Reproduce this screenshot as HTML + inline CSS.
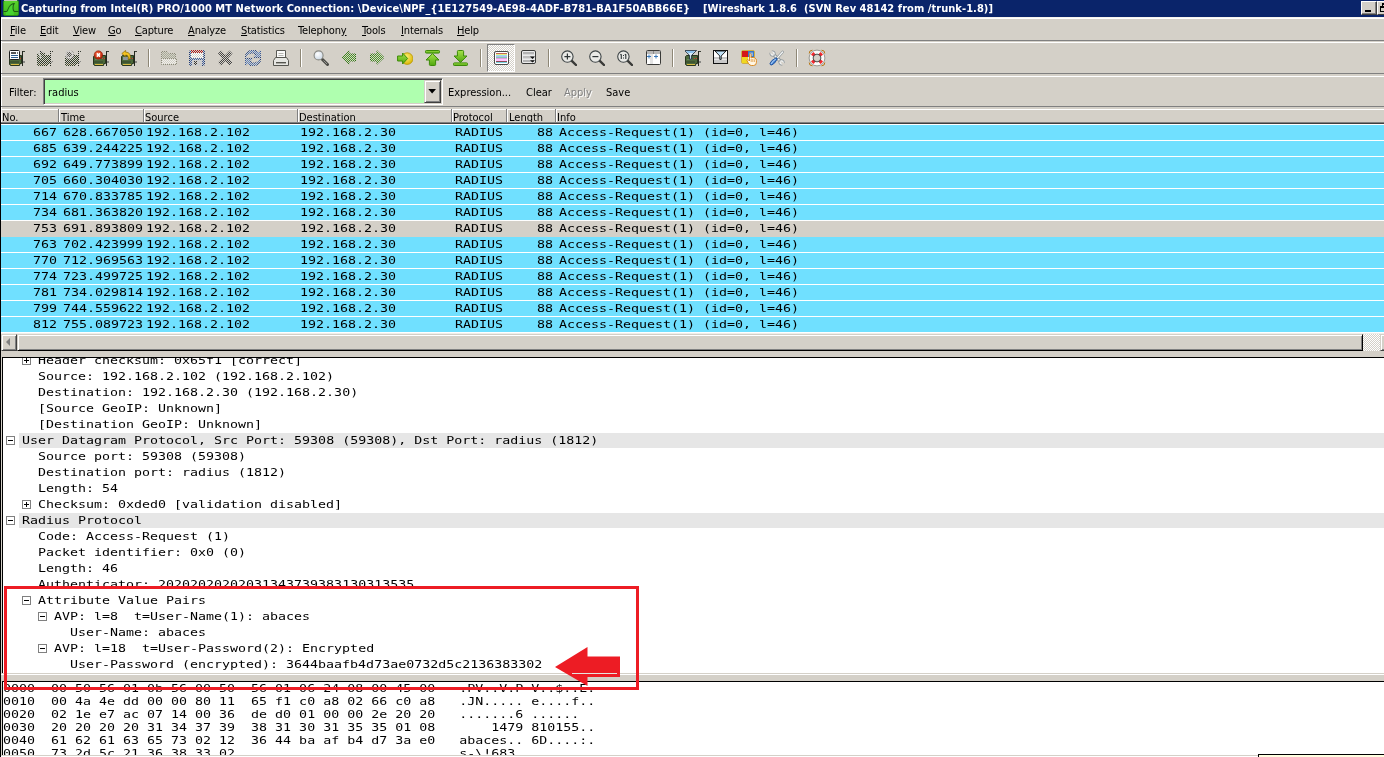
<!DOCTYPE html><html><head><meta charset="utf-8"><title>Wireshark</title><style>
html,body{margin:0;padding:0}
body{width:1384px;height:757px;position:relative;overflow:hidden;background:#D4D0C8;font-family:"DejaVu Sans Condensed","Liberation Sans",sans-serif;font-size:11px;color:#000}
.a{position:absolute}
.t{position:absolute;white-space:pre;line-height:13px;height:13px}
.m{position:absolute;white-space:pre;font-family:"DejaVu Sans Mono","Liberation Mono",monospace;font-size:11px;line-height:16px;height:16px;transform:scaleX(1.2085);transform-origin:0 0;left:0}
.hl{position:absolute;left:1px;right:0;height:1px}
u{text-decoration:underline;text-underline-offset:1px}
.row{position:absolute;left:1px;right:0;height:15px;background:#70E0FF;border-bottom:1px solid #fff;overflow:hidden}
.row .m{top:0px}
.tr .m{top:2px}
.tr{position:absolute;left:0;right:0;height:16px}
.ex{position:absolute;width:7px;height:7px;border:1px solid #808080;background:#fff}
.ex i{position:absolute;left:1px;top:3px;width:5px;height:1px;background:#000}
.ex b{position:absolute;left:3px;top:1px;width:1px;height:5px;background:#000}
.hx{position:absolute;left:0;white-space:pre;font-family:"DejaVu Sans Mono","Liberation Mono",monospace;font-size:11px;line-height:13px;height:13px;transform:scaleX(1.2085);transform-origin:0 0}
</style></head><body><div id="w" style="position:absolute;left:0;top:0;width:1384px;height:757px;will-change:transform">
<div class="a" style="left:0;top:0;width:1px;height:757px;background:#000"></div>
<div class="a" id="title" style="left:1px;top:0;right:0;height:17px;background:#0A246A"></div>
<svg class="a" style="left:3px;top:0" width="16" height="16" viewBox="0 0 16 16"><defs><linearGradient id="ag" x1="0" y1="0" x2="0" y2="1"><stop offset="0" stop-color="#58D22C"/><stop offset="1" stop-color="#3FB81E"/></linearGradient></defs><rect x="0.5" y="0.5" width="15" height="15" rx="1.5" fill="url(#ag)" stroke="#2B8A1A"/><rect x="1" y="0" width="13" height="1" fill="#BFC8B8"/><path d="M0.5 11.5 H3.6 C5.4 11.5 5.2 4.4 11 3.6 C9.4 6.2 9.8 11.5 11.6 11.5 H15.5" fill="none" stroke="#1F5E14" stroke-width="1.1"/><path d="M4.6 11.5 C5.8 9 6 5 10.2 4.2 C8.8 7 9.4 11 10.8 12 V15 H3 V12 Z" fill="#49E63C" opacity="0.55"/></svg>
<div class="t" id="tt1" style="left:21px;top:2px;letter-spacing:0.073px;color:#fff;font-weight:bold">Capturing from Intel(R) PRO/1000 MT Network Connection: \Device\NPF_{1E127549-AE98-4ADF-B781-BA1F50ABB66E}</div>
<div class="t" id="tt2" style="left:703px;top:2px;letter-spacing:0.05px;color:#fff;font-weight:bold">[Wireshark 1.8.6  (SVN Rev 48142 from /trunk-1.8)]</div>
<div class="a" style="left:1361px;top:1px;width:14px;height:12px;background:#D4D0C8;border:1px solid;border-color:#fff #404040 #404040 #fff;box-shadow:inset -1px -1px 0 #808080"><div class="a" style="left:3px;top:8px;width:6px;height:2px;background:#000"></div></div>
<div class="a" style="left:1377px;top:1px;width:14px;height:12px;background:#D4D0C8;border:1px solid;border-color:#fff #404040 #404040 #fff"><div class="a" style="left:4px;top:1px;width:5px;height:4px;border:1px solid #000;border-top-width:2px"></div><div class="a" style="left:2px;top:4px;width:4px;height:3px;border:1px solid #000;border-top-width:2px;background:#D4D0C8"></div></div>
<div class="a" style="left:1px;top:17px;width:1px;height:106px;background:#fff"></div>
<div class="hl" style="top:17px;background:#F6F4EE"></div><div class="hl" style="top:18px;background:#fff"></div>
<div class="t" style="left:10px;top:24px;letter-spacing:-0.15px"><u>F</u>ile</div>
<div class="t" style="left:40px;top:24px;letter-spacing:-0.15px"><u>E</u>dit</div>
<div class="t" style="left:73px;top:24px;letter-spacing:-0.15px"><u>V</u>iew</div>
<div class="t" style="left:108px;top:24px;letter-spacing:-0.15px"><u>G</u>o</div>
<div class="t" style="left:135px;top:24px;letter-spacing:-0.15px"><u>C</u>apture</div>
<div class="t" style="left:188px;top:24px;letter-spacing:-0.15px"><u>A</u>nalyze</div>
<div class="t" style="left:241px;top:24px;letter-spacing:-0.15px"><u>S</u>tatistics</div>
<div class="t" style="left:298px;top:24px;letter-spacing:-0.15px">Telephon<u>y</u></div>
<div class="t" style="left:362px;top:24px;letter-spacing:-0.15px"><u>T</u>ools</div>
<div class="t" style="left:401px;top:24px;letter-spacing:-0.15px"><u>I</u>nternals</div>
<div class="t" style="left:457px;top:24px;letter-spacing:-0.15px"><u>H</u>elp</div>
<div class="hl" style="top:40px;background:#808080"></div><div class="hl" style="top:42px;background:#fff"></div>
<svg class="a" width="0" height="0" style="left:0;top:0"><defs><pattern id="chk" width="2" height="2" patternUnits="userSpaceOnUse"><rect width="1" height="1" fill="#fff"/><rect x="1" y="1" width="1" height="1" fill="#fff"/></pattern><mask id="dm" maskUnits="userSpaceOnUse" x="0" y="0" width="16" height="16"><rect width="16" height="16" fill="url(#chk)"/></mask><linearGradient id="gg" x1="0" y1="0" x2="0" y2="1"><stop offset="0" stop-color="#A6E24A"/><stop offset="1" stop-color="#4FA70E"/></linearGradient><radialGradient id="yg" cx="0.4" cy="0.35" r="0.7"><stop offset="0" stop-color="#FFF27A"/><stop offset="1" stop-color="#D9B400"/></radialGradient><radialGradient id="lens" cx="0.4" cy="0.35" r="0.7"><stop offset="0" stop-color="#FFFFFF"/><stop offset="1" stop-color="#C9D6E4"/></radialGradient><radialGradient id="rg" cx="0.4" cy="0.3" r="0.8"><stop offset="0" stop-color="#F0603A"/><stop offset="1" stop-color="#B21800"/></radialGradient></defs></svg>
<svg class="a" style="left:9px;top:50px" width="16" height="16" viewBox="0 0 16 16" ><path d="M0.5 6.5 L1.5 5.5 H12.5 V13.5 H11 L10.5 15.5 H1.5 L0.5 14.5 Z" fill="#4C683B" stroke="#28361F"/><rect x="1" y="11" width="9" height="2" fill="#3E5531"/><rect x="2" y="9" width="5" height="1" fill="#66845A"/><rect x="2" y="14" width="8" height="1" fill="#D9BC45"/><rect x="9" y="8" width="1" height="1" fill="#D23A2E"/><rect x="11" y="8" width="1" height="1" fill="#D23A2E"/><rect x="13" y="1" width="1" height="15" fill="#23281F"/><rect x="14" y="1" width="2" height="1" fill="#3A3F36"/><rect x="14" y="11" width="2" height="2" fill="#8A8A86"/><rect x="0.5" y="0.5" width="10" height="9" rx="1" fill="#fff" stroke="#1E1E1E"/><rect x="2" y="2" width="5" height="2" fill="#555"/><rect x="8" y="2" width="1" height="2" fill="#777"/><rect x="2" y="5" width="7" height="1" fill="#2F5F8F"/><rect x="2" y="7" width="7" height="1" fill="#2F5F8F"/></svg>
<svg class="a" style="left:37px;top:50px" width="16" height="16" viewBox="0 0 16 16" ><g mask="url(#dm)"><path d="M0.5 6.5 L1.5 5.5 H12.5 V13.5 H11 L10.5 15.5 H1.5 L0.5 14.5 Z" fill="#34422B" stroke="#28361F"/><rect x="1" y="11" width="9" height="2" fill="#2A3324"/><rect x="2" y="9" width="5" height="1" fill="#34422B"/><rect x="2" y="14" width="8" height="1" fill="#5A5230"/><rect x="9" y="8" width="1" height="1" fill="#D23A2E"/><rect x="11" y="8" width="1" height="1" fill="#D23A2E"/><rect x="13" y="1" width="1" height="15" fill="#23281F"/><rect x="14" y="1" width="2" height="1" fill="#3A3F36"/><rect x="14" y="11" width="2" height="2" fill="#8A8A86"/><rect x="0" y="3" width="8" height="3" fill="#34422B"/><path d="M1 1 L4 8" stroke="#D8D8D8" stroke-width="1.6"/><path d="M3 1 L6 3" stroke="#222" stroke-width="1.4"/></g></svg>
<svg class="a" style="left:65px;top:50px" width="16" height="16" viewBox="0 0 16 16" ><g mask="url(#dm)"><path d="M0.5 6.5 L1.5 5.5 H12.5 V13.5 H11 L10.5 15.5 H1.5 L0.5 14.5 Z" fill="#34422B" stroke="#28361F"/><rect x="1" y="11" width="9" height="2" fill="#2A3324"/><rect x="2" y="9" width="5" height="1" fill="#34422B"/><rect x="2" y="14" width="8" height="1" fill="#5A5230"/><rect x="9" y="8" width="1" height="1" fill="#D23A2E"/><rect x="11" y="8" width="1" height="1" fill="#D23A2E"/><rect x="13" y="1" width="1" height="15" fill="#23281F"/><rect x="14" y="1" width="2" height="1" fill="#3A3F36"/><rect x="14" y="11" width="2" height="2" fill="#8A8A86"/><circle cx="4.6" cy="5" r="4.6" fill="#555"/><circle cx="4.2" cy="4.4" r="3.4" fill="none" stroke="#D8D8D8" stroke-width="1.6"/></g></svg>
<svg class="a" style="left:93px;top:50px" width="16" height="16" viewBox="0 0 16 16" ><path d="M0.5 6.5 L1.5 5.5 H12.5 V13.5 H11 L10.5 15.5 H1.5 L0.5 14.5 Z" fill="#4C683B" stroke="#28361F"/><rect x="1" y="11" width="9" height="2" fill="#3E5531"/><rect x="2" y="9" width="5" height="1" fill="#66845A"/><rect x="2" y="14" width="8" height="1" fill="#D9BC45"/><rect x="9" y="8" width="1" height="1" fill="#D23A2E"/><rect x="11" y="8" width="1" height="1" fill="#D23A2E"/><rect x="13" y="1" width="1" height="15" fill="#23281F"/><rect x="14" y="1" width="2" height="1" fill="#3A3F36"/><rect x="14" y="11" width="2" height="2" fill="#8A8A86"/><circle cx="5.4" cy="5" r="4.2" fill="url(#rg)" stroke="#8E1A08" stroke-width="0.6"/><path d="M3.8 3.4 L7 6.6 M7 3.4 L3.8 6.6" stroke="#fff" stroke-width="1.5"/></svg>
<svg class="a" style="left:121px;top:50px" width="16" height="16" viewBox="0 0 16 16" ><path d="M0.5 6.5 L1.5 5.5 H12.5 V13.5 H11 L10.5 15.5 H1.5 L0.5 14.5 Z" fill="#4C683B" stroke="#28361F"/><rect x="1" y="11" width="9" height="2" fill="#3E5531"/><rect x="2" y="9" width="5" height="1" fill="#66845A"/><rect x="2" y="14" width="8" height="1" fill="#D9BC45"/><rect x="9" y="8" width="1" height="1" fill="#D23A2E"/><rect x="11" y="8" width="1" height="1" fill="#D23A2E"/><rect x="13" y="1" width="1" height="15" fill="#23281F"/><rect x="14" y="1" width="2" height="1" fill="#3A3F36"/><rect x="14" y="11" width="2" height="2" fill="#8A8A86"/><rect x="2" y="7" width="5" height="3" fill="#8E979B"/><path d="M0.8 3.6 L4.6 0.4 V2.2 C8.5 2.2 10 4.6 9 8.8 L7.2 9.6 C7.8 6.6 6.8 5 4.6 5 V6.8 Z" fill="#F4C320" stroke="#8A6A08" stroke-width="0.7"/></svg>
<div class="a" style="left:148px;top:49px;width:1px;height:18px;background:#8E8776"></div><div class="a" style="left:149px;top:49px;width:1px;height:18px;background:#fff"></div>
<svg class="a" style="left:161px;top:50px" width="16" height="16" viewBox="0 0 16 16" ><g mask="url(#dm)"><path d="M0.5 1.5 H6.5 L7.5 3.5 H14.5 V8 L15.5 9 V14.5 H0.5 Z" fill="#F0F0EA" stroke="#8A8A78"/><path d="M1 2 H6.2 L7.2 4 H14 V8 H1 Z" fill="#A8AC98"/><path d="M0.5 8.5 H15" stroke="#8A8A78"/></g></svg>
<svg class="a" style="left:189px;top:50px" width="16" height="16" viewBox="0 0 16 16" ><g mask="url(#dm)"><rect x="0.5" y="0.5" width="15" height="15" rx="1" fill="#3E5FA0" stroke="#1F3C78"/><rect x="2" y="0" width="12" height="3" fill="#B01818"/><rect x="2" y="3" width="12" height="5" fill="#fff"/><rect x="3" y="10" width="10" height="6" fill="#C8CCD4"/><rect x="5" y="11" width="3" height="4" fill="#333"/></g></svg>
<svg class="a" style="left:217px;top:50px" width="16" height="16" viewBox="0 0 16 16" ><g mask="url(#dm)"><path d="M2.5 2 L14 14 M14 2 L2.5 14" stroke="#444" stroke-width="4.2"/></g></svg>
<svg class="a" style="left:245px;top:50px" width="16" height="16" viewBox="0 0 16 16" ><g mask="url(#dm)"><path d="M0 6.2 C1.5 2 5 0 8 0 C10 0 12 0.8 13.4 2.4 L16 0 V7.6 H8.4 L10.8 5 C9.8 3.6 8.6 3 7.4 3 C4.8 3 2.6 4.4 1.2 6.8 Z" fill="#5C82C0" stroke="#14306C" stroke-width="0.9"/><g transform="rotate(180 8 8)"><path d="M0 6.2 C1.5 2 5 0 8 0 C10 0 12 0.8 13.4 2.4 L16 0 V7.6 H8.4 L10.8 5 C9.8 3.6 8.6 3 7.4 3 C4.8 3 2.6 4.4 1.2 6.8 Z" fill="#5C82C0" stroke="#14306C" stroke-width="0.9"/></g></g></svg>
<svg class="a" style="left:273px;top:50px" width="16" height="16" viewBox="0 0 16 16" ><path d="M3.5 8 V0.5 H12.5 V8" fill="#FBFBFA" stroke="#5A5A55"/><path d="M5.5 3.5 H10.5 M5.5 5.5 H10.5" stroke="#B5B5B0"/><path d="M2.5 7.5 H13.5 L15.5 10.5 V15.5 H0.5 V10.5 Z" fill="#E6E6E2" stroke="#55554F"/><rect x="3" y="12" width="10" height="1.4" fill="#55554F"/></svg>
<div class="a" style="left:300px;top:49px;width:1px;height:18px;background:#8E8776"></div><div class="a" style="left:301px;top:49px;width:1px;height:18px;background:#fff"></div>
<svg class="a" style="left:313px;top:50px" width="16" height="16" viewBox="0 0 16 16" ><path d="M9.5 9.5 L14.5 14.5" stroke="#4A4A46" stroke-width="3" stroke-linecap="round"/><path d="M10.5 10.5 L14 14" stroke="#9A9A94" stroke-width="1"/><circle cx="5.6" cy="5.4" r="4.5" fill="url(#lens)" stroke="#8A8A84" stroke-width="1.1"/></svg>
<svg class="a" style="left:341px;top:50px" width="16" height="16" viewBox="0 0 16 16" ><g mask="url(#dm)"><path d="M1 7.5 L8 0.8 V4 H14.5 V11 H8 V14.2 Z" fill="#4E9A2A" stroke="#2E7010"/></g></svg>
<svg class="a" style="left:369px;top:50px" width="16" height="16" viewBox="0 0 16 16" ><g mask="url(#dm)"><path d="M15 7.5 L8 0.8 V4 H1.5 V11 H8 V14.2 Z" fill="#4E9A2A" stroke="#2E7010"/></g></svg>
<svg class="a" style="left:397px;top:50px" width="16" height="16" viewBox="0 0 16 16" ><circle cx="10.2" cy="8.6" r="5.8" fill="url(#yg)" stroke="#B89400" stroke-width="0.8"/><path d="M10.6 8.5 L5.6 3 V6 H0.6 V11 H5.6 V14 Z" fill="url(#gg)" stroke="#3C8A08" stroke-width="1"/></svg>
<svg class="a" style="left:425px;top:50px" width="16" height="16" viewBox="0 0 16 16" ><rect x="0.5" y="0.5" width="14" height="2.6" rx="0.8" fill="url(#gg)" stroke="#3C8A08"/><path d="M7.5 6 L10.5 9 H9 V14 H6 V9 H4.5 Z" fill="#C8F08A" opacity="0.0"/><path d="M7.5 3.6 L14 10 H10.6 V14.6 Q10.6 15.5 9.6 15.5 H5.4 Q4.4 15.5 4.4 14.6 V10 H1 Z" fill="url(#gg)" stroke="#3C8A08"/></svg>
<svg class="a" style="left:453px;top:50px" width="16" height="16" viewBox="0 0 16 16" ><rect x="0.5" y="12.9" width="14" height="2.6" rx="0.8" fill="url(#gg)" stroke="#3C8A08"/><path d="M7.5 12.4 L14 6 H10.6 V1.4 Q10.6 0.5 9.6 0.5 H5.4 Q4.4 0.5 4.4 1.4 V6 H1 Z" fill="url(#gg)" stroke="#3C8A08"/></svg>
<div class="a" style="left:480px;top:49px;width:1px;height:18px;background:#8E8776"></div><div class="a" style="left:481px;top:49px;width:1px;height:18px;background:#fff"></div>
<div class="a" style="left:487px;top:44px;width:28px;height:28px;box-sizing:border-box;background:repeating-conic-gradient(#fff 0% 25%, #D4D0C8 0% 50%) 0 0/2px 2px;border:1px solid;border-color:#808080 #fff #fff #808080"></div>
<svg class="a" style="left:494px;top:51px" width="15" height="14" viewBox="0 0 15 14" ><rect x="0.5" y="0.5" width="14" height="13" rx="1.5" fill="#fff" stroke="#4A4A48"/><rect x="2" y="2" width="11" height="1" fill="#C06858"/><rect x="2" y="3" width="11" height="1" fill="#F0EA80"/><rect x="2" y="4" width="11" height="1" fill="#98E0EA"/><rect x="2" y="5" width="11" height="1" fill="#B4BCF0"/><rect x="2" y="6" width="11" height="1" fill="#84C8B4"/><rect x="2" y="7" width="11" height="1" fill="#E0A0DC"/><rect x="2" y="8" width="11" height="2" fill="#FFC4FF"/><rect x="2" y="10" width="11" height="1" fill="#8A4850"/><rect x="2" y="11" width="11" height="1" fill="#78D0DC"/></svg>
<svg class="a" style="left:521px;top:50px" width="15" height="14" viewBox="0 0 15 14" ><rect x="0.5" y="0.5" width="14" height="13" rx="1.5" fill="#ECECEC" stroke="#3A3A38"/><rect x="2" y="2" width="11" height="2" fill="#B4B4B4"/><rect x="2" y="4" width="11" height="1" fill="#DADADA"/><rect x="2" y="6" width="11" height="2" fill="#BEBEBE"/><rect x="2" y="8" width="11" height="1" fill="#DADADA"/><rect x="2" y="10" width="11" height="2" fill="#B4B4B4"/><path d="M9 6.6 H14 L11.5 9 Z M9 10.2 H14 L11.5 12.6 Z" fill="#111"/></svg>
<div class="a" style="left:548px;top:49px;width:1px;height:18px;background:#8E8776"></div><div class="a" style="left:549px;top:49px;width:1px;height:18px;background:#fff"></div>
<svg class="a" style="left:561px;top:50px" width="16" height="16" viewBox="0 0 16 16" ><path d="M10.8 10.8 L15 15" stroke="#3A3A38" stroke-width="2.4" stroke-linecap="round"/><circle cx="6.4" cy="6.6" r="5.7" fill="#E9E9E6" stroke="#3E4446" stroke-width="1.1"/><path d="M3.4 6.6 H9.4 M6.4 3.6 V9.6" stroke="#2E3436" stroke-width="1.2"/></svg>
<svg class="a" style="left:589px;top:50px" width="16" height="16" viewBox="0 0 16 16" ><path d="M10.8 10.8 L15 15" stroke="#3A3A38" stroke-width="2.4" stroke-linecap="round"/><circle cx="6.4" cy="6.6" r="5.7" fill="#E9E9E6" stroke="#3E4446" stroke-width="1.1"/><path d="M3.4 6.6 H9.4" stroke="#2E3436" stroke-width="1.2"/></svg>
<svg class="a" style="left:617px;top:50px" width="16" height="16" viewBox="0 0 16 16" ><path d="M10.8 10.8 L15 15" stroke="#3A3A38" stroke-width="2.4" stroke-linecap="round"/><circle cx="6.4" cy="6.6" r="5.7" fill="#E9E9E6" stroke="#3E4446" stroke-width="1.1"/><path d="M4.3 4.2 V9 M3.4 5 L4.3 4.2 M8.8 4.2 V9 M7.9 5 L8.8 4.2" stroke="#2E3436" stroke-width="1.1" fill="none"/><rect x="6" y="5" width="1" height="1" fill="#2E3436"/><rect x="6" y="7.5" width="1" height="1" fill="#2E3436"/></svg>
<svg class="a" style="left:646px;top:50px" width="15" height="15" viewBox="0 0 15 15" ><rect x="0.5" y="0.5" width="14" height="14" rx="1" fill="#fff" stroke="#3A3A38"/><rect x="1" y="1" width="13" height="3" fill="#B8B8B8"/><rect x="4" y="4" width="3" height="10" fill="#E4E4E4"/><path d="M7.5 1 V4" stroke="#888"/><path d="M1 6.5 H5 M3 4.5 V8.5 M8 6.5 H12 M10 4.5 V8.5" stroke="#3A78B8" stroke-width="1"/></svg>
<div class="a" style="left:672px;top:49px;width:1px;height:18px;background:#8E8776"></div><div class="a" style="left:673px;top:49px;width:1px;height:18px;background:#fff"></div>
<svg class="a" style="left:685px;top:50px" width="16" height="16" viewBox="0 0 16 16" ><path d="M0.5 6.5 L1.5 5.5 H12.5 V13.5 H11 L10.5 15.5 H1.5 L0.5 14.5 Z" fill="#4C683B" stroke="#28361F"/><rect x="1" y="11" width="9" height="2" fill="#3E5531"/><rect x="2" y="9" width="5" height="1" fill="#66845A"/><rect x="2" y="14" width="8" height="1" fill="#D9BC45"/><rect x="9" y="8" width="1" height="1" fill="#D23A2E"/><rect x="11" y="8" width="1" height="1" fill="#D23A2E"/><rect x="13" y="1" width="1" height="15" fill="#23281F"/><rect x="14" y="1" width="2" height="1" fill="#3A3F36"/><rect x="14" y="11" width="2" height="2" fill="#8A8A86"/><path d="M-0.5 0.4 H11.5 L6.6 5.4 V9.2 H4.6 V5.4 Z" fill="#D6ECFA" stroke="#1A2A3A" stroke-width="0.9"/><path d="M1 1 H10 L8 3 H3 Z" fill="#8EC4EE"/></svg>
<svg class="a" style="left:713px;top:50px" width="15" height="14" viewBox="0 0 15 14" ><rect x="0.5" y="0.5" width="14" height="13" fill="#fff" stroke="#111"/><rect x="1" y="7" width="13" height="6" fill="#C9C9C9"/><rect x="1" y="9" width="13" height="1" fill="#E8E8E8"/><path d="M2 1 H13 L8.2 6 V9.4 H6.8 V6 Z" fill="#BFE0F6" stroke="#111" stroke-width="0.9"/></svg>
<svg class="a" style="left:741px;top:50px" width="16" height="16" viewBox="0 0 16 16" ><rect x="0.5" y="0.5" width="13" height="13" rx="1.5" fill="#fff" stroke="#C8A020" stroke-width="0.8"/><rect x="1" y="1" width="6" height="6" fill="#D41818"/><rect x="7" y="1" width="6" height="6" fill="#3A78C8"/><rect x="8.5" y="2.5" width="3.5" height="3.5" fill="#8CB4E8"/><rect x="1" y="7" width="6" height="6" fill="#F0D820"/><rect x="7" y="7" width="6" height="6" fill="#F4F0E0"/><path d="M8.5 4.6 Q8.5 3.6 9.3 3.6 Q10.1 3.6 10.1 4.6 V8 L11 7.4 L12 7.6 L13 7.6 L14.2 8.2 Q15.4 8.8 15.4 10.4 V12.5 Q15.4 15.5 12.5 15.5 H10.5 Q8.6 15.5 7.6 13.6 L6 10.8 Q5.6 9.8 6.6 9.6 Q7.4 9.6 8.5 11 Z" fill="#FFF6E4" stroke="#D88010" stroke-width="0.9"/><path d="M10.2 9 V12 M11.8 9 V12 M13.4 9.4 V12" stroke="#D88010" stroke-width="0.6"/></svg>
<svg class="a" style="left:769px;top:50px" width="16" height="16" viewBox="0 0 16 16" ><path d="M4 4 L12.4 12.2" stroke="#8A9296" stroke-width="3.2"/><path d="M4 4 L12.4 12.2" stroke="#EEF0F0" stroke-width="1.6"/><circle cx="3.6" cy="3.6" r="2.7" fill="#EEF0F0" stroke="#8A9296" stroke-width="0.9"/><path d="M3.6 3.6 L-0.5 1.2 L1.2 -0.5 Z" fill="#D4D0C8" stroke="#D4D0C8" stroke-width="1.2"/><circle cx="12.6" cy="12.4" r="2.7" fill="#EEF0F0" stroke="#8A9296" stroke-width="0.9"/><path d="M12.6 12.4 L16.8 14.6 L15 16.6 Z" fill="#D4D0C8" stroke="#D4D0C8" stroke-width="1.2"/><path d="M13.6 2 L8.6 7.6" stroke="#8A9296" stroke-width="2.6" stroke-linecap="round"/><path d="M13.6 2 L8.6 7.6" stroke="#F4F6F6" stroke-width="1.3" stroke-linecap="round"/><path d="M8 8 L6.8 8 Q2 10.5 1 13.4 Q1 15.2 2.8 15 Q6 13.6 8 9.4 Z" fill="#3E7ED0" stroke="#1C4E98" stroke-width="0.9"/><path d="M6.4 9.4 Q3.4 11.4 2.4 13.4" stroke="#A8CCF4" stroke-width="1.1" fill="none" stroke-linecap="round"/></svg>
<div class="a" style="left:796px;top:49px;width:1px;height:18px;background:#8E8776"></div><div class="a" style="left:797px;top:49px;width:1px;height:18px;background:#fff"></div>
<svg class="a" style="left:808px;top:49px" width="18" height="18" viewBox="0 0 18 18" ><g fill="none" stroke="#B87818" stroke-width="1"><path d="M1.2 4.5 Q1 1.2 4.5 1.2 M13.5 1.2 Q17 1.2 16.8 4.5 M16.8 13.5 Q17 16.8 13.5 16.8 M4.5 16.8 Q1 16.8 1.2 13.5"/></g><circle cx="9" cy="9" r="5.9" fill="none" stroke="#FAFAF8" stroke-width="4.2"/><g fill="#F4262C"><rect x="-1.7" y="-1.7" width="3.4" height="3.4" transform="translate(5.4 5.4) rotate(45)"/><rect x="-1.7" y="-1.7" width="3.4" height="3.4" transform="translate(12.6 5.4) rotate(45)"/><rect x="-1.7" y="-1.7" width="3.4" height="3.4" transform="translate(5.4 12.6) rotate(45)"/><rect x="-1.7" y="-1.7" width="3.4" height="3.4" transform="translate(12.6 12.6) rotate(45)"/></g><circle cx="9" cy="9" r="7.9" fill="none" stroke="#8E8E8A" stroke-width="0.9"/><circle cx="9" cy="9" r="3.9" fill="none" stroke="#4A4E4E" stroke-width="1"/></svg>
<div class="hl" style="top:73px;background:#808080"></div><div class="hl" style="top:76px;background:#fff"></div>
<div class="t" style="left:9px;top:86px">Filter:</div>
<div class="a" style="left:43px;top:78px;width:400px;height:27px;box-sizing:border-box;background:#AFFFAF;border:1px solid;border-color:#808080 #fff #fff #808080;box-shadow:inset 1px 1px 0 #404040, inset -1px -1px 0 #D4D0C8"></div>
<div class="t" style="left:48px;top:86px">radius</div>
<div class="a" style="left:424px;top:80px;width:17px;height:23px;box-sizing:border-box;background:#D4D0C8;border:1px solid;border-color:#D4D0C8 #404040 #404040 #D4D0C8;box-shadow:inset 1px 1px 0 #fff, inset -1px -1px 0 #808080"></div>
<svg class="a" style="left:424px;top:80px" width="17" height="23" viewBox="424 80 17 23"><path d="M428.3 89 H436 L432.15 93.4 Z" fill="#000"/></svg>
<div class="t fb" style="left:448px;top:86px;color:#000">Expression...</div>
<div class="t fb" style="left:526px;top:86px;color:#000">Clear</div>
<div class="t fb" style="left:564px;top:86px;color:#808080;text-shadow:1px 1px 0 #fff">Apply</div>
<div class="t fb" style="left:606px;top:86px;color:#000">Save</div>
<div class="hl" style="top:106px;background:#808080"></div><div class="hl" style="top:109px;background:#fff"></div>
<div class="t" style="left:2px;top:111px">No.</div>
<div class="a" style="left:58px;top:109px;width:1px;height:14px;background:#808080"></div><div class="a" style="left:59px;top:109px;width:1px;height:14px;background:#fff"></div>
<div class="t" style="left:61px;top:111px">Time</div>
<div class="a" style="left:143px;top:109px;width:1px;height:14px;background:#808080"></div><div class="a" style="left:144px;top:109px;width:1px;height:14px;background:#fff"></div>
<div class="t" style="left:145px;top:111px">Source</div>
<div class="a" style="left:297px;top:109px;width:1px;height:14px;background:#808080"></div><div class="a" style="left:298px;top:109px;width:1px;height:14px;background:#fff"></div>
<div class="t" style="left:299px;top:111px">Destination</div>
<div class="a" style="left:451px;top:109px;width:1px;height:14px;background:#808080"></div><div class="a" style="left:452px;top:109px;width:1px;height:14px;background:#fff"></div>
<div class="t" style="left:453px;top:111px">Protocol</div>
<div class="a" style="left:506px;top:109px;width:1px;height:14px;background:#808080"></div><div class="a" style="left:507px;top:109px;width:1px;height:14px;background:#fff"></div>
<div class="t" style="left:509px;top:111px">Length</div>
<div class="a" style="left:555px;top:109px;width:1px;height:14px;background:#808080"></div><div class="a" style="left:556px;top:109px;width:1px;height:14px;background:#fff"></div>
<div class="t" style="left:557px;top:111px">Info</div>
<div class="hl" style="top:122px;background:#808080"></div><div class="hl" style="top:123px;background:#404040"></div>
<div class="row" style="top:125px"><span class="m" style="left:32px">667</span><span class="m" style="left:62px">628.667050</span><span class="m" style="left:145px">192.168.2.102</span><span class="m" style="left:299px">192.168.2.30</span><span class="m" style="left:454px">RADIUS</span><span class="m" style="left:536px">88</span><span class="m" style="left:558px">Access-Request(1) (id=0, l=46)</span></div>
<div class="row" style="top:141px"><span class="m" style="left:32px">685</span><span class="m" style="left:62px">639.244225</span><span class="m" style="left:145px">192.168.2.102</span><span class="m" style="left:299px">192.168.2.30</span><span class="m" style="left:454px">RADIUS</span><span class="m" style="left:536px">88</span><span class="m" style="left:558px">Access-Request(1) (id=0, l=46)</span></div>
<div class="row" style="top:157px"><span class="m" style="left:32px">692</span><span class="m" style="left:62px">649.773899</span><span class="m" style="left:145px">192.168.2.102</span><span class="m" style="left:299px">192.168.2.30</span><span class="m" style="left:454px">RADIUS</span><span class="m" style="left:536px">88</span><span class="m" style="left:558px">Access-Request(1) (id=0, l=46)</span></div>
<div class="row" style="top:173px"><span class="m" style="left:32px">705</span><span class="m" style="left:62px">660.304030</span><span class="m" style="left:145px">192.168.2.102</span><span class="m" style="left:299px">192.168.2.30</span><span class="m" style="left:454px">RADIUS</span><span class="m" style="left:536px">88</span><span class="m" style="left:558px">Access-Request(1) (id=0, l=46)</span></div>
<div class="row" style="top:189px"><span class="m" style="left:32px">714</span><span class="m" style="left:62px">670.833785</span><span class="m" style="left:145px">192.168.2.102</span><span class="m" style="left:299px">192.168.2.30</span><span class="m" style="left:454px">RADIUS</span><span class="m" style="left:536px">88</span><span class="m" style="left:558px">Access-Request(1) (id=0, l=46)</span></div>
<div class="row" style="top:205px"><span class="m" style="left:32px">734</span><span class="m" style="left:62px">681.363820</span><span class="m" style="left:145px">192.168.2.102</span><span class="m" style="left:299px">192.168.2.30</span><span class="m" style="left:454px">RADIUS</span><span class="m" style="left:536px">88</span><span class="m" style="left:558px">Access-Request(1) (id=0, l=46)</span></div>
<div class="row" style="top:221px;background:#D4D0C8;border-bottom-color:#D4D0C8"><span class="m" style="left:32px">753</span><span class="m" style="left:62px">691.893809</span><span class="m" style="left:145px">192.168.2.102</span><span class="m" style="left:299px">192.168.2.30</span><span class="m" style="left:454px">RADIUS</span><span class="m" style="left:536px">88</span><span class="m" style="left:558px">Access-Request(1) (id=0, l=46)</span></div>
<div class="row" style="top:237px"><span class="m" style="left:32px">763</span><span class="m" style="left:62px">702.423999</span><span class="m" style="left:145px">192.168.2.102</span><span class="m" style="left:299px">192.168.2.30</span><span class="m" style="left:454px">RADIUS</span><span class="m" style="left:536px">88</span><span class="m" style="left:558px">Access-Request(1) (id=0, l=46)</span></div>
<div class="row" style="top:253px"><span class="m" style="left:32px">770</span><span class="m" style="left:62px">712.969563</span><span class="m" style="left:145px">192.168.2.102</span><span class="m" style="left:299px">192.168.2.30</span><span class="m" style="left:454px">RADIUS</span><span class="m" style="left:536px">88</span><span class="m" style="left:558px">Access-Request(1) (id=0, l=46)</span></div>
<div class="row" style="top:269px"><span class="m" style="left:32px">774</span><span class="m" style="left:62px">723.499725</span><span class="m" style="left:145px">192.168.2.102</span><span class="m" style="left:299px">192.168.2.30</span><span class="m" style="left:454px">RADIUS</span><span class="m" style="left:536px">88</span><span class="m" style="left:558px">Access-Request(1) (id=0, l=46)</span></div>
<div class="row" style="top:285px"><span class="m" style="left:32px">781</span><span class="m" style="left:62px">734.029814</span><span class="m" style="left:145px">192.168.2.102</span><span class="m" style="left:299px">192.168.2.30</span><span class="m" style="left:454px">RADIUS</span><span class="m" style="left:536px">88</span><span class="m" style="left:558px">Access-Request(1) (id=0, l=46)</span></div>
<div class="row" style="top:301px"><span class="m" style="left:32px">799</span><span class="m" style="left:62px">744.559622</span><span class="m" style="left:145px">192.168.2.102</span><span class="m" style="left:299px">192.168.2.30</span><span class="m" style="left:454px">RADIUS</span><span class="m" style="left:536px">88</span><span class="m" style="left:558px">Access-Request(1) (id=0, l=46)</span></div>
<div class="row" style="top:317px"><span class="m" style="left:32px">812</span><span class="m" style="left:62px">755.089723</span><span class="m" style="left:145px">192.168.2.102</span><span class="m" style="left:299px">192.168.2.30</span><span class="m" style="left:454px">RADIUS</span><span class="m" style="left:536px">88</span><span class="m" style="left:558px">Access-Request(1) (id=0, l=46)</span></div>
<div class="a" style="left:1px;right:0;top:124px;height:1px;background:#fff"></div>
<div class="a" style="left:1px;right:0;top:333px;height:1px;background:#F0EEEA"></div>
<div class="a" style="left:1px;right:0;top:334px;height:17px;background:#D4D0C8"></div>
<div class="a" style="left:1363px;top:334px;width:17px;height:17px;background:repeating-conic-gradient(#fff 0% 25%, #D4D0C8 0% 50%) 0 0/2px 2px"></div>
<div class="a" style="left:17px;top:334px;width:1346px;height:17px;box-sizing:border-box;background:#D4D0C8;border:1px solid;border-color:#D4D0C8 #000 #000 #D4D0C8;box-shadow:inset 1px 1px 0 #fff, inset -1px -1px 0 #808080"></div>
<div class="a" style="left:1px;top:334px;width:16px;height:17px;box-sizing:border-box;background:#D4D0C8;border:1px solid;border-color:#D4D0C8 #404040 #404040 #D4D0C8;box-shadow:inset 1px 1px 0 #fff, inset -1px -1px 0 #808080"><div class="a" style="left:4px;top:3px;width:0;height:0;border-top:4px solid transparent;border-bottom:4px solid transparent;border-right:4px solid #808080"></div></div>
<div class="a" style="left:1380px;top:334px;width:16px;height:17px;box-sizing:border-box;background:#D4D0C8;border:1px solid;border-color:#D4D0C8 #404040 #404040 #D4D0C8;box-shadow:inset 1px 1px 0 #fff, inset -1px -1px 0 #808080"></div>
<!--SCROLLCORNER-->
<div class="a" id="tree" style="left:2px;top:357px;right:0;height:317px;background:#fff;border-left:1px solid #000;border-top:1px solid #000;overflow:hidden">
<div class="tr" style="top:-7px"><span class="ex" style="left:19px;top:5px"><i></i><b></b></span><span class="m" style="left:35px">Header checksum: 0x65f1 [correct]</span></div>
<div class="tr" style="top:9px"><span class="m" style="left:35px">Source: 192.168.2.102 (192.168.2.102)</span></div>
<div class="tr" style="top:25px"><span class="m" style="left:35px">Destination: 192.168.2.30 (192.168.2.30)</span></div>
<div class="tr" style="top:41px"><span class="m" style="left:35px">[Source GeoIP: Unknown]</span></div>
<div class="tr" style="top:57px"><span class="m" style="left:35px">[Destination GeoIP: Unknown]</span></div>
<div class="tr" style="top:73px"><div class="a" style="left:16px;top:2px;right:0;height:15px;background:#E6E6E6"></div><span class="ex" style="left:3px;top:5px"><i></i></span><span class="m" style="left:19px">User Datagram Protocol, Src Port: 59308 (59308), Dst Port: radius (1812)</span></div>
<div class="tr" style="top:89px"><span class="m" style="left:35px">Source port: 59308 (59308)</span></div>
<div class="tr" style="top:105px"><span class="m" style="left:35px">Destination port: radius (1812)</span></div>
<div class="tr" style="top:121px"><span class="m" style="left:35px">Length: 54</span></div>
<div class="tr" style="top:137px"><span class="ex" style="left:19px;top:5px"><i></i><b></b></span><span class="m" style="left:35px">Checksum: 0xded0 [validation disabled]</span></div>
<div class="tr" style="top:153px"><div class="a" style="left:16px;top:2px;right:0;height:15px;background:#E6E6E6"></div><span class="ex" style="left:3px;top:5px"><i></i></span><span class="m" style="left:19px">Radius Protocol</span></div>
<div class="tr" style="top:169px"><span class="m" style="left:35px">Code: Access-Request (1)</span></div>
<div class="tr" style="top:185px"><span class="m" style="left:35px">Packet identifier: 0x0 (0)</span></div>
<div class="tr" style="top:201px"><span class="m" style="left:35px">Length: 46</span></div>
<div class="tr" style="top:217px"><span class="m" style="left:35px">Authenticator: 20202020202031343739383130313535</span></div>
<div class="tr" style="top:233px"><span class="ex" style="left:19px;top:5px"><i></i></span><span class="m" style="left:35px">Attribute Value Pairs</span></div>
<div class="tr" style="top:249px"><span class="ex" style="left:35px;top:5px"><i></i></span><span class="m" style="left:51px">AVP: l=8  t=User-Name(1): abaces</span></div>
<div class="tr" style="top:265px"><span class="m" style="left:67px">User-Name: abaces</span></div>
<div class="tr" style="top:281px"><span class="ex" style="left:35px;top:5px"><i></i></span><span class="m" style="left:51px">AVP: l=18  t=User-Password(2): Encrypted</span></div>
<div class="tr" style="top:297px"><span class="m" style="left:67px">User-Password (encrypted): 3644baafb4d73ae0732d5c2136383302</span></div>
</div>
<div class="hl" style="top:673px;background:#D4D0C8"></div>
<div class="hl" style="top:674px;background:#fff"></div><div class="a" style="left:1px;right:0;top:675px;height:6px;background:#D4D0C8"></div>
<div class="a" id="hex" style="left:2px;top:681px;right:0;height:75px;background:#fff;border-left:1px solid #000;border-top:1px solid #000;overflow:hidden">
<div class="hx" style="top:0px;left:0px">0000  00 50 56 01 0b 56 00 50  56 01 06 24 08 00 45 00   .PV..V.P V..$..E.</div>
<div class="hx" style="top:13px;left:0px">0010  00 4a 4e dd 00 00 80 11  65 f1 c0 a8 02 66 c0 a8   .JN..... e....f..</div>
<div class="hx" style="top:26px;left:0px">0020  02 1e e7 ac 07 14 00 36  de d0 01 00 00 2e 20 20   .......6 ......  </div>
<div class="hx" style="top:39px;left:0px">0030  20 20 20 20 31 34 37 39  38 31 30 31 35 35 01 08       1479 810155..</div>
<div class="hx" style="top:52px;left:0px">0040  61 62 61 63 65 73 02 12  36 44 ba af b4 d7 3a e0   abaces.. 6D....:.</div>
<div class="hx" style="top:65px;left:0px">0050  73 2d 5c 21 36 38 33 02                            s-\!683</div>
</div>
<div class="a" style="left:1px;top:755px;width:1257px;height:1px;background:#D4D0C8"></div><div class="a" style="left:1px;top:756px;width:1257px;height:1px;background:#fff"></div>
<div class="a" style="left:1258px;top:754px;width:130px;height:5px;background:#FFFFE1;border:1px solid #000"></div>
<div class="a" style="left:4px;top:586px;width:635px;height:104px;box-sizing:border-box;border:3px solid #ED1C24"></div>
<svg class="a" style="left:550px;top:640px" width="80" height="52" viewBox="550 640 80 52"><path d="M555 667 L587.5 647 L587.5 656.5 L620 656.5 L620 677 L587.5 677 L587.5 686 Z" fill="#ED1C24"/><rect x="572" y="673" width="45" height="1" fill="#E6E3DE"/></svg>
</div></body></html>
